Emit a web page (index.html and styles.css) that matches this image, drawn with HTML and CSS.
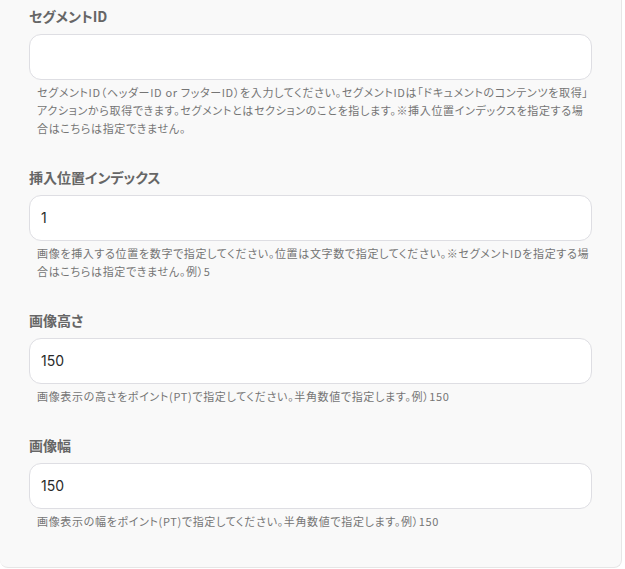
FILE: index.html
```html
<!DOCTYPE html>
<html lang="ja">
<head>
<meta charset="utf-8">
<link rel="stylesheet" href="styles.css">
</head>
<body>
<div class="panel">
  <div class="field">
    <div class="label">セグメントID</div>
    <div class="input"></div>
    <div class="help">セグメントID（ヘッダーID or フッターID）を入力してください。セグメントIDは「ドキュメントのコンテンツを取得」アクションから取得できます。セグメントとはセクションのことを指します。※挿入位置インデックスを指定する場合はこちらは指定できません。</div>
  </div>
  <div class="field">
    <div class="label">挿入位置インデックス</div>
    <div class="input">1</div>
    <div class="help">画像を挿入する位置を数字で指定してください。位置は文字数で指定してください。※セグメントIDを指定する場合はこちらは指定できません。例）5</div>
  </div>
  <div class="field">
    <div class="label">画像高さ</div>
    <div class="input">150</div>
    <div class="help">画像表示の高さをポイント(PT)で指定してください。半角数値で指定します。例）150</div>
  </div>
  <div class="field">
    <div class="label">画像幅</div>
    <div class="input">150</div>
    <div class="help">画像表示の幅をポイント(PT)で指定してください。半角数値で指定します。例）150</div>
  </div>
</div>
</body>
</html>
```
FILE: styles.css
```css
html, body {
  margin: 0;
  padding: 0;
  background: #ffffff;
}
body {
  font-family: "Inter", "Noto Sans CJK JP", sans-serif;
}
.panel {
  width: 622px;
  height: 568px;
  box-sizing: border-box;
  background: #f9f9f9;
  border-right: 1px solid #e6e6e6;
  border-bottom: 1px solid #e6e6e6;
  border-radius: 0 0 8px 8px;
  padding: 6px 29px 0 29px;
  display: flex;
  flex-direction: column;
  gap: 30px;
}
.label {
  font-family: "Noto Sans CJK JP", sans-serif;
  font-size: 14px;
  font-weight: 600;
  line-height: 20px;
  color: #666666;
  margin-bottom: 8px;
  font-feature-settings: "palt";
}
.input {
  height: 46px;
  box-sizing: border-box;
  background: #ffffff;
  border: 1px solid #dedee3;
  border-radius: 12px;
  padding: 0 11px;
  font-size: 14px;
  line-height: 44px;
  color: #2a2a2a;
}
.help {
  margin-top: 3px;
  padding: 0 0 0 8px;
  font-family: "Noto Sans CJK JP", sans-serif;
  font-feature-settings: "palt";
  font-size: 11px;
  letter-spacing: 0.06em;
  line-height: 18px;
  color: #757575;
}
```
